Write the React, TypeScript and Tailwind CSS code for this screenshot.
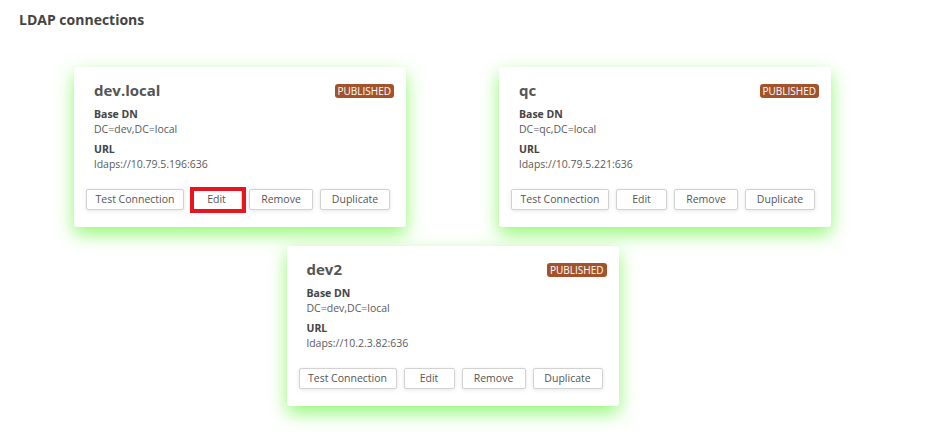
import React from "react";

type Connection = {
  name: string;
  baseDn: string;
  url: string;
  highlightEdit?: boolean;
};

const connections: Connection[] = [
  { name: "dev.local", baseDn: "DC=dev,DC=local", url: "ldaps://10.79.5.196:636", highlightEdit: true },
  { name: "qc", baseDn: "DC=qc,DC=local", url: "ldaps://10.79.5.221:636" },
  { name: "dev2", baseDn: "DC=dev,DC=local", url: "ldaps://10.2.3.82:636" },
];

function ActionButton({ label, width }: { label: string; width: string }) {
  return (
    <button
      className={`${width} h-[21px] flex items-center justify-center bg-white border border-[#d2d2d2] rounded-[2px] text-[10.5px] text-[#555] shadow-[0_1px_4px_rgba(0,0,0,0.1)]`}
    >
      {label}
    </button>
  );
}

function ConnectionCard({ conn }: { conn: Connection }) {
  return (
    <div className="w-[332px] h-[160px] bg-white rounded-[3px] shadow-[0_7px_18px_rgba(110,245,70,0.75)] flex flex-col pl-[20px] pr-[12px] pt-[12px]">
      {/* Header: name + status */}
      <div className="flex items-start justify-between">
        <h3 className="text-[15px] font-bold text-[#555] leading-[22px]">{conn.name}</h3>
        <span className="mt-[5px] h-[14px] px-[3px] flex items-center bg-[#a3532c] text-white text-[10px] leading-none rounded-[3px]">
          PUBLISHED
        </span>
      </div>

      {/* Details */}
      <div className="mt-[6px] text-[10.5px] leading-[14px]">
        <p className="font-bold text-[#444]">Base DN</p>
        <p className="mt-[1px] text-[#5a5a5a]">{conn.baseDn}</p>
        <p className="mt-[6px] font-bold text-[#444]">URL</p>
        <p className="mt-[1px] text-[#5a5a5a]">{conn.url}</p>
      </div>

      {/* Actions */}
      <div className="mt-[18px] -ml-[8px] flex gap-[7px]">
        <ActionButton label="Test Connection" width="w-[98px]" />
        <div className="relative">
          <ActionButton label="Edit" width="w-[51px]" />
          {conn.highlightEdit && (
            <div className="absolute -left-[1px] -right-[4px] -top-[2px] -bottom-[3px] border-[4px] border-[#e8141e] pointer-events-none" />
          )}
        </div>
        <ActionButton label="Remove" width="w-[64px]" />
        <ActionButton label="Duplicate" width="w-[70px]" />
      </div>
    </div>
  );
}

export default function App() {
  return (
    <div
      className="min-h-screen bg-white"
      style={{ fontFamily: '"Open Sans", "Noto Sans", sans-serif' }}
    >
      <h1 className="pl-[19px] pt-[10px] text-[14px] font-bold text-[#444] leading-[20px]">
        LDAP connections
      </h1>
      <div className="ml-[19px] w-[867px] mt-[37px] flex flex-wrap justify-center gap-x-[93px] gap-y-[19px]">
        {connections.map((c) => (
          <ConnectionCard key={c.name} conn={c} />
        ))}
      </div>
    </div>
  );
}
